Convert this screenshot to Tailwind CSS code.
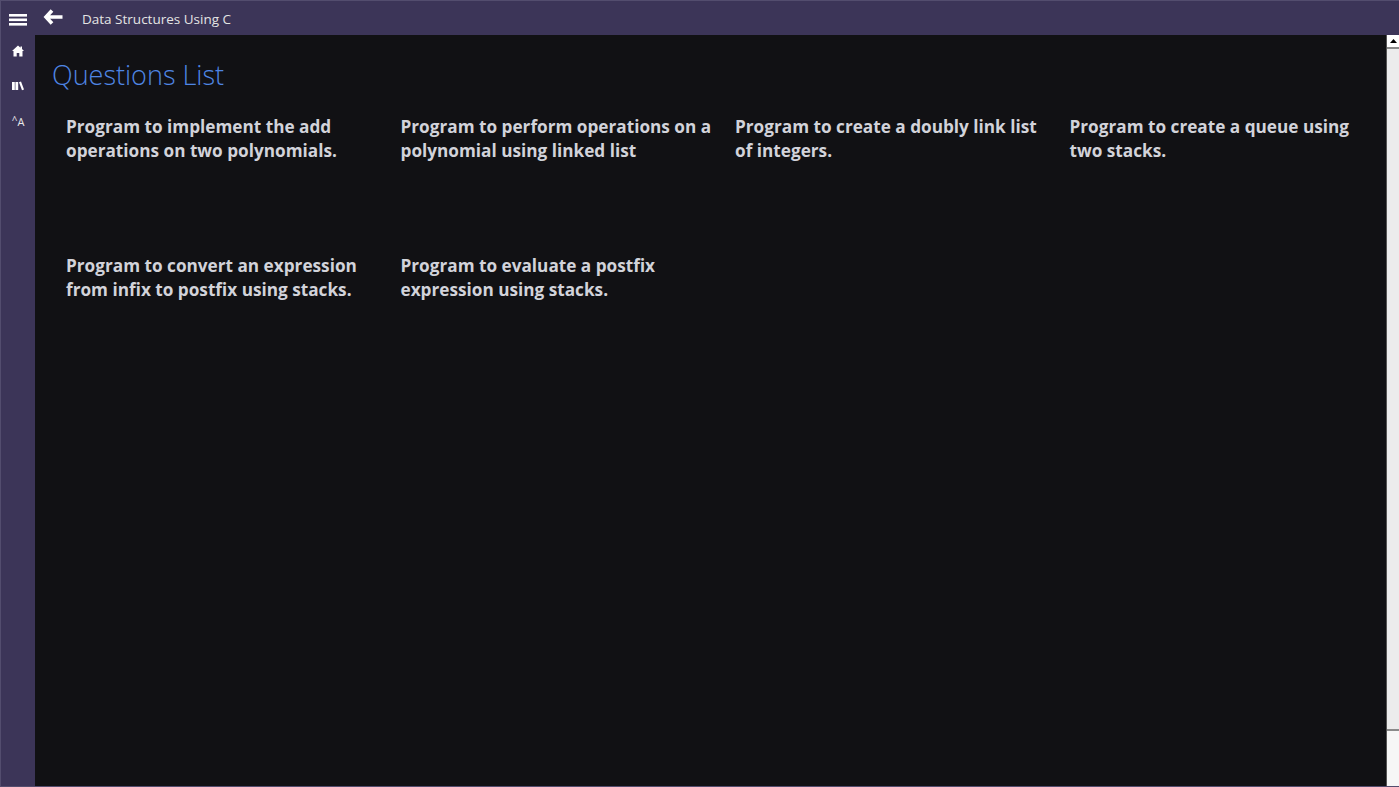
<!DOCTYPE html>
<html>
<head>
<meta charset="utf-8">
<script src="https://cdn.jsdelivr.net/npm/@tailwindcss/browser@4"></script>
</head>
<body class="h-[787px] w-[1399px] overflow-hidden bg-[#111114] font-['Open_Sans','Noto_Sans',sans-serif]">
    <div class="flex h-full flex-col border-t border-b border-l border-[#534d6e]">
        <!-- Top bar -->
        <div class="flex h-[34px] shrink-0 items-center bg-[#3c3558]">
            <button class="flex w-[34px] justify-center pt-[3px]">
                <svg width="18" height="12" viewBox="0 0 18 12" fill="#fff"><rect y="0" width="18" height="2.6"/><rect y="4.500" width="18" height="2.6"/><rect y="9" width="18" height="2.6"/></svg>
            </button>
            <button class="ml-[8px] mb-[3px]">
                <svg width="20" height="16" viewBox="0 0 20 16" fill="none" stroke="#fff" stroke-width="3.600"><path d="M9 1.500 3 8l6 6.500M3.500 8H19.500"/></svg>
            </button>
            <span class="ml-[19px] pt-[2px] text-[13.5px] text-[#e4e4e4]">Data Structures Using C</span>
        </div>
        <div class="flex min-h-0 flex-1">
            <!-- Side rail -->
            <div class="flex w-[34px] shrink-0 flex-col items-center gap-[21px] bg-[#3c3558] pt-[9px] text-white">
                <svg class="h-[14px] w-[14px]" viewBox="0 0 14 14" fill="#fff"><path d="M7 1.500 9.500 3.700V2.500h1.500v2.500L13 7h-1.500v5.500H8.300V9H5.700v3.500H2.500V7H1z"/></svg>
                <svg class="h-[14px] w-[14px]" viewBox="0 0 14 14" fill="#fff"><path d="M1 3h2.800v8H1zM4.400 3h2.800v8H4.400zM8 3.200l2-.7 3 8-2 .7z"/></svg>
                <span class="flex h-[14px] items-center text-[11px] leading-none text-[#e8e8e8]"><span class="pb-[2px] text-[10px]">^</span>A</span>
            </div>
            <!-- Content -->
            <div class="relative min-w-0 flex-1 pl-[17px] pt-[21px]">
                <h1 class="text-[27px] leading-[38px] font-light text-[#4f86e4]">Questions List</h1>
                <div class="mt-[21px] grid w-[1352px] grid-cols-4 pl-[14px]">
                    <p class="h-[139px] pr-[20px] text-[17.2px] leading-[24px] font-bold text-[#d2d3da]">Program to implement the add operations on two polynomials.</p>
                    <p class="h-[139px] pr-[20px] text-[17.2px] leading-[24px] font-bold text-[#d2d3da]">Program to perform operations on a polynomial using linked list</p>
                    <p class="h-[139px] pr-[20px] text-[17.2px] leading-[24px] font-bold text-[#d2d3da]">Program to create a doubly link list of integers.</p>
                    <p class="h-[139px] pr-[20px] text-[17.2px] leading-[24px] font-bold text-[#d2d3da]">Program to create a queue using two stacks.</p>
                    <p class="h-[139px] pr-[20px] text-[17.2px] leading-[24px] font-bold text-[#d2d3da]">Program to convert an expression from infix to postfix using stacks.</p>
                    <p class="h-[139px] pr-[20px] text-[17.2px] leading-[24px] font-bold text-[#d2d3da]">Program to evaluate a postfix expression using stacks.</p>
                </div>
                <!-- Scrollbar -->
                <div class="absolute top-0 right-0 flex h-full w-[13px] flex-col border-l border-[#555] bg-[#f6f6f6]">
                    <div class="flex h-[12px] items-center justify-center bg-white">
                        <svg width="7" height="4" viewBox="0 0 7 4" fill="#000"><path d="M3.500 0 7 4H0z"/></svg>
                    </div>
                    <div class="h-[684px] border-y-2 border-[#8a8a8a] bg-[#ececec]"></div>
                </div>
            </div>
        </div>
    </div>
</body>
</html>
